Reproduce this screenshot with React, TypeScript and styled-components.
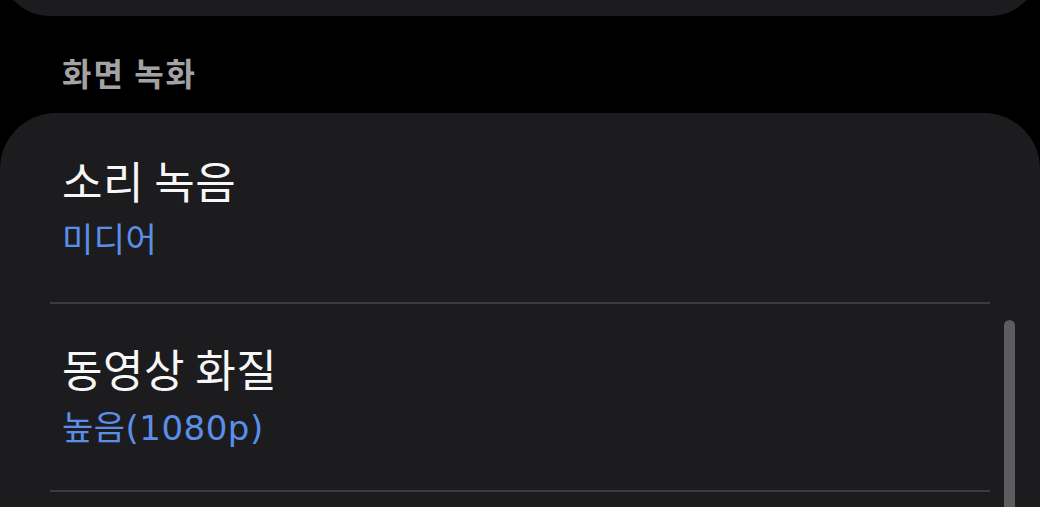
import React from "react";
import styled, { createGlobalStyle } from "styled-components";

const GlobalStyle = createGlobalStyle`
  html, body {
    margin: 0;
    padding: 0;
    background: #000000;
  }
  body {
    font-family: "Noto Sans CJK KR", "Noto Sans", sans-serif;
    -webkit-font-smoothing: antialiased;
  }
`;

const Screen = styled.div`
  position: relative;
  width: 1040px;
  height: 507px;
  overflow: hidden;
  background: #000000;
  display: flex;
  flex-direction: column;
`;

const Card = styled.div`
  background: #1c1c1e;
  border-radius: 56px;
  flex-shrink: 0;
`;

const PrevCard = styled(Card)`
  height: 100px;
  margin-top: -84px;
`;

const SectionHeader = styled.div`
  padding: 36px 62px 0;
  height: 40px;
  font-size: 32px;
  line-height: 40px;
  font-weight: 700;
  letter-spacing: 2px;
  color: #a3a3a5;
  margin-bottom: 21px;
`;

const SettingsCard = styled(Card)`
  flex: 1 0 auto;
  padding-top: 3px;
  border-bottom-left-radius: 0;
  border-bottom-right-radius: 0;
`;

const Row = styled.div`
  display: flex;
  flex-direction: column;
  gap: 10px;
  padding: 36px 62px 40px;
`;

const Title = styled.div`
  font-size: 44px;
  line-height: 56px;
  font-weight: 400;
  letter-spacing: 0.5px;
  color: #f7f7f7;
`;

const Value = styled.div`
  font-family: "DejaVu Sans", "Noto Sans CJK KR", sans-serif;
  font-size: 34px;
  line-height: 44px;
  font-weight: 400;
  letter-spacing: 0.5px;
  color: #5b8ee8;
`;

const Divider = styled.div`
  height: 2px;
  margin: 0 50px;
  background: #3b3b3d;
`;

const ScrollThumb = styled.div`
  position: absolute;
  left: 1004px;
  top: 320px;
  width: 11px;
  height: 240px;
  border-radius: 6px;
  background: #5d5d60;
`;

const items = [
  { title: "소리 녹음", value: "미디어" },
  { title: "동영상 화질", value: "높음(1080p)" },
];

export default function App() {
  return (
    <>
      <GlobalStyle />
      <Screen>
        <PrevCard />
        <SectionHeader>화면 녹화</SectionHeader>
        <SettingsCard>
          {items.map((it, i) => (
            <React.Fragment key={i}>
              <Row>
                <Title>{it.title}</Title>
                <Value>{it.value}</Value>
              </Row>
              <Divider />
            </React.Fragment>
          ))}
        </SettingsCard>
        <ScrollThumb />
      </Screen>
    </>
  );
}
